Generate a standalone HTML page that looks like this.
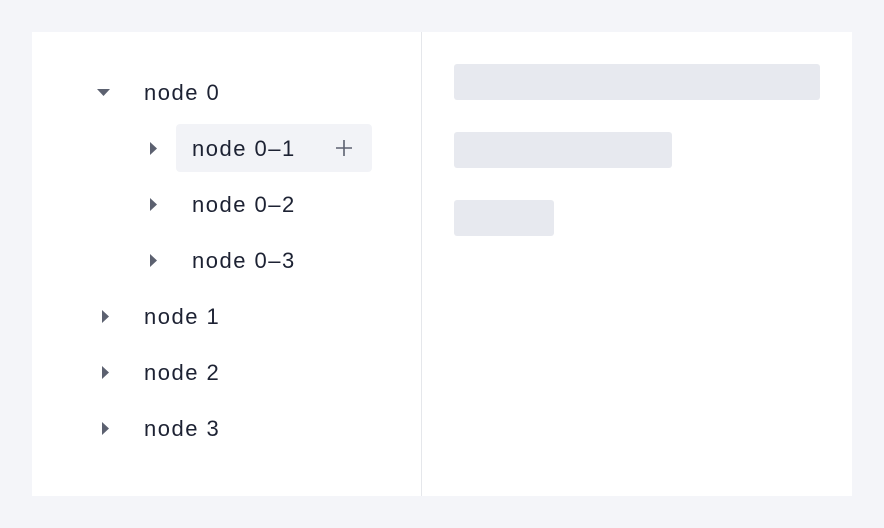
<!DOCTYPE html>
<html><head><style>
body{margin:0;width:884px;height:528px;background:#f4f5f9;font-family:"Liberation Sans",sans-serif;position:relative;overflow:hidden}
.panel{position:absolute;left:32px;top:32px;width:820px;height:464px;background:#fff}
.div{position:absolute;left:421px;top:32px;width:1px;height:464px;background:#e5e7eb}
.t{position:absolute;font-size:22px;letter-spacing:1.5px;color:#1d2233;line-height:24px}
.bar{position:absolute;background:#e7e9ef;border-radius:3px}
.hl{position:absolute;left:176px;top:124px;width:196px;height:48px;background:#f2f3f7;border-radius:4px}
svg{position:absolute}
</style></head><body>
<div class="panel"></div><div class="div"></div>
<div class="hl"></div>
<svg style="left:97px;top:88px" width="14" height="9"><path d="M0 1H13L6.5 8Z" fill="#5c6170"/></svg>
<div class="t" style="left:144px;top:81px">node 0</div>
<svg style="left:149px;top:141px" width="9" height="15"><path d="M1 1V14L8 7.5Z" fill="#5c6170"/></svg>
<div class="t" style="left:192px;top:137px">node 0–1</div>
<svg style="left:335px;top:139px" width="18" height="18"><path d="M9 1V17M1 9H17" stroke="#5c6170" stroke-width="1.6"/></svg>
<svg style="left:149px;top:197px" width="9" height="15"><path d="M1 1V14L8 7.5Z" fill="#5c6170"/></svg>
<div class="t" style="left:192px;top:193px">node 0–2</div>
<svg style="left:149px;top:253px" width="9" height="15"><path d="M1 1V14L8 7.5Z" fill="#5c6170"/></svg>
<div class="t" style="left:192px;top:249px">node 0–3</div>
<svg style="left:101px;top:309px" width="9" height="15"><path d="M1 1V14L8 7.5Z" fill="#5c6170"/></svg>
<div class="t" style="left:144px;top:305px">node 1</div>
<svg style="left:101px;top:365px" width="9" height="15"><path d="M1 1V14L8 7.5Z" fill="#5c6170"/></svg>
<div class="t" style="left:144px;top:361px">node 2</div>
<svg style="left:101px;top:421px" width="9" height="15"><path d="M1 1V14L8 7.5Z" fill="#5c6170"/></svg>
<div class="t" style="left:144px;top:417px">node 3</div>
<div class="bar" style="left:454px;top:64px;width:366px;height:36px"></div>
<div class="bar" style="left:454px;top:132px;width:218px;height:36px"></div>
<div class="bar" style="left:454px;top:200px;width:100px;height:36px"></div>
</body></html>
